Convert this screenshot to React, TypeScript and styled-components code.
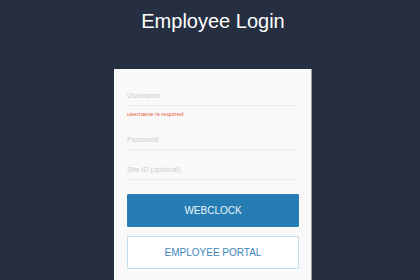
import React from "react";
import styled, { createGlobalStyle } from "styled-components";

const Global = createGlobalStyle`
  html, body { margin: 0; padding: 0; background: #252f41; }
  body { font-family: "Liberation Sans", Arial, sans-serif; }
`;

const Page = styled.div`
  width: 420px;
  height: 280px;
  box-sizing: border-box;
  padding-left: 6px;
  overflow: hidden;
  background: #252f41;
  display: flex;
  flex-direction: column;
  align-items: center;
`;

const Title = styled.h1`
  margin: 10px 0 0 0;
  font-size: 20px;
  line-height: 23px;
  font-weight: 400;
  color: #ffffff;
`;

const Card = styled.div`
  margin-top: 36px;
  width: 198px;
  box-sizing: border-box;
  background: #f9f9f9;
  border-right: 1px solid #9aa0a8;
  padding: 17px 12px 20px 13px;
  display: flex;
  flex-direction: column;
  flex-shrink: 0;
`;

const Field = styled.div<{ $gap?: number }>`
  border-bottom: 1px solid #eeeeee;
  height: 19px;
  margin-top: ${(p) => p.$gap ?? 0}px;
  display: flex;
  align-items: center;
`;

const Placeholder = styled.span`
  font-size: 7.2px;
  color: #cccccc;
`;

const ErrorText = styled.div`
  font-size: 6px;
  color: #e8593a;
  margin-top: 5px;
  line-height: 7px;
`;

const Button = styled.button<{ $primary?: boolean }>`
  height: 33px;
  width: 100%;
  box-sizing: border-box;
  font-family: "Liberation Sans", Arial, sans-serif;
  font-size: 10px;
  border-radius: 1px;
  margin-top: ${(p) => (p.$primary ? 14 : 9)}px;
  background: ${(p) => (p.$primary ? "#267db3" : "#ffffff")};
  color: ${(p) => (p.$primary ? "#eef5fa" : "#3b86ba")};
  border: 1px solid ${(p) => (p.$primary ? "#2a80b5" : "#c3dcee")};
  padding: 0;
`;

export default function App() {
  return (
    <Page>
      <Global />
      <Title>Employee Login</Title>
      <Card>
        <Field>
          <Placeholder>Username</Placeholder>
        </Field>
        <ErrorText>username is required</ErrorText>
        <Field $gap={12}>
          <Placeholder>Password</Placeholder>
        </Field>
        <Field $gap={10}>
          <Placeholder>Site ID (optional)</Placeholder>
        </Field>
        <Button $primary>WEBCLOCK</Button>
        <Button>EMPLOYEE PORTAL</Button>
      </Card>
    </Page>
  );
}
